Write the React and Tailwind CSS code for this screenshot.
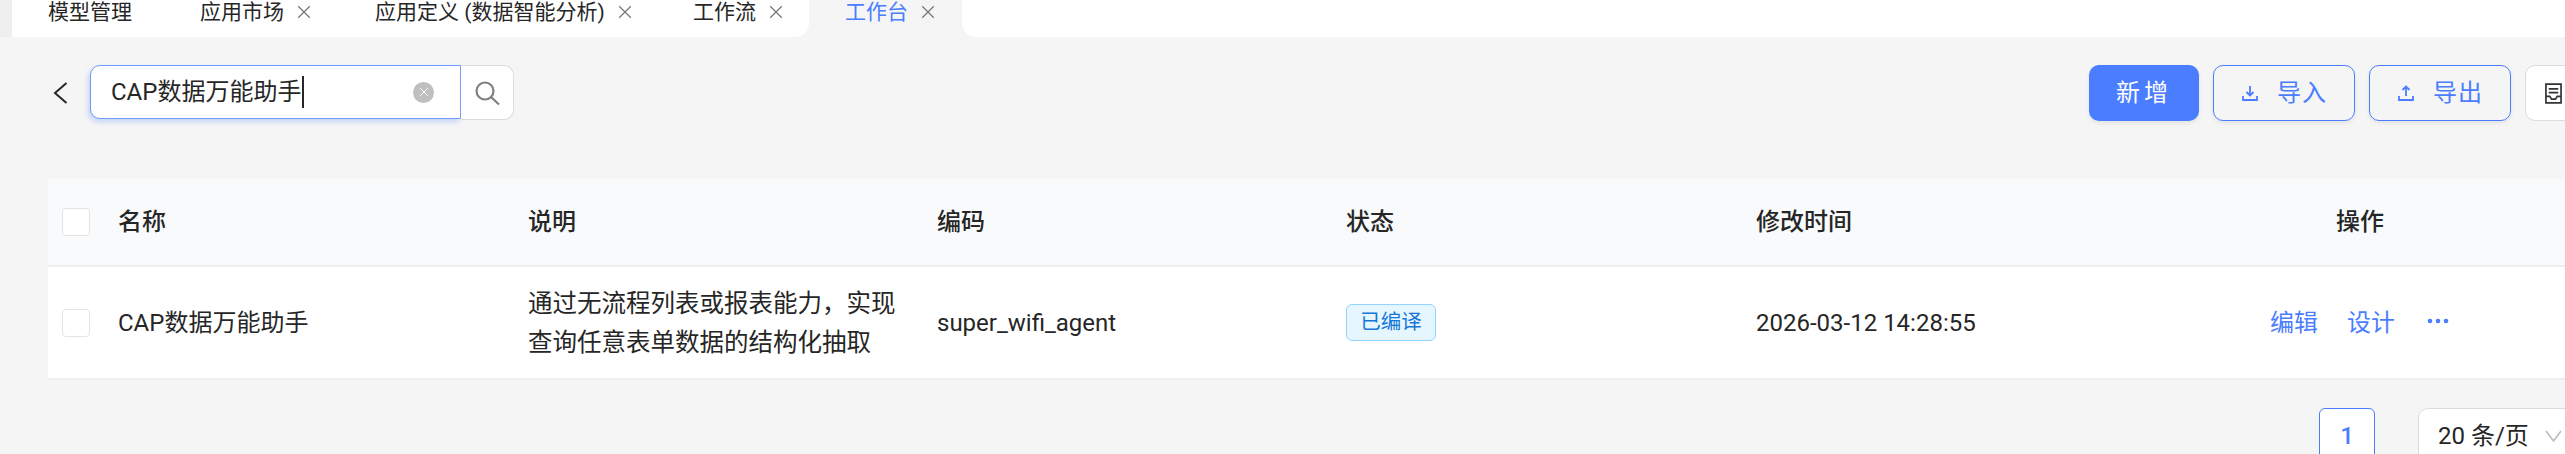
import React from 'react'

function CloseIcon({ className }) {
  return (
    <svg viewBox="0 0 14 14" className={className} fill="none" stroke="currentColor" strokeWidth="1">
      <path d="M2.5 2.5l9 9M11.5 2.5l-9 9" />
    </svg>
  )
}

function Tab({ label, active, close, className }) {
  return (
    <div className={`flex items-center shrink-0 h-[24px] text-[21px] leading-[24px] whitespace-nowrap ${className}`}>
      <span className={active ? 'text-[#4a7dff]' : 'text-[#262626]'}>{label}</span>
      {close && <CloseIcon className="w-[18px] h-[18px] ml-[11px] text-[#777]" />}
    </div>
  )
}

function TabBar() {
  return (
    <div className="flex h-[37px] bg-[#f5f5f5]">
      <div className="w-[12px] bg-[#efefef]" />
      <div className="flex w-[797px] bg-white rounded-br-[14px] pl-[36px]">
        <Tab label="模型管理" className="w-[152px]" />
        <Tab label="应用市场" close className="w-[175px]" />
        <Tab label="应用定义 (数据智能分析)" close className="w-[318px]" />
        <Tab label="工作流" close className="w-[116px]" />
      </div>
      <div className="w-[153px] pl-[36px]">
        <Tab label="工作台" active close />
      </div>
      <div className="flex-1 bg-white rounded-bl-[14px]" />
    </div>
  )
}

function Toolbar() {
  return (
    <div className="flex items-center w-[2581px] h-[56px] mt-[28px] pl-[52px]">
      <svg viewBox="0 0 16 24" className="w-[16px] h-[24px] text-[#262626]" fill="none" stroke="currentColor" strokeWidth="2">
        <path d="M14.5 2L3 12l11.5 10" />
      </svg>
      <div className="flex ml-[22px] h-[55px] self-start">
        <div className="flex items-center w-[371px] h-[54px] bg-white border border-[#6f9bff] rounded-l-[10px] pl-[20px] pr-[26px] shadow-[-2px_3px_5px_rgba(74,125,255,0.28)]">
          <span className="text-[24px] text-[#262626] whitespace-nowrap">CAP数据万能助手</span>
          <span className="w-[2px] h-[32px] ml-[1px] bg-[#262626]" />
          <span className="ml-auto flex items-center justify-center w-[21px] h-[21px] rounded-full bg-[#bfbfbf]">
            <CloseIcon className="w-[12px] h-[12px] text-white" />
          </span>
        </div>
        <div className="flex items-center justify-center w-[53px] h-[55px] bg-white border border-l-0 border-[#dcdcdc] rounded-r-[10px]">
          <svg viewBox="0 0 26 26" className="w-[26px] h-[26px] text-[#808080]" fill="none" stroke="currentColor" strokeWidth="2.2">
            <circle cx="11" cy="11" r="8.5" />
            <path d="M17 17l8 7.5" />
          </svg>
        </div>
      </div>
      <div className="flex ml-auto gap-[14px]">
        <button className="w-[110px] h-[56px] bg-[#4a7dff] rounded-[10px] text-white text-[24px] tracking-[4px] shadow-[0_2px_4px_rgba(0,0,0,0.08)]">新增</button>
        <button className="flex items-center justify-center w-[142px] h-[56px] border border-[#4a7dff] rounded-[10px] text-[#4a7dff] text-[24px] tracking-[1px] shadow-[0_2px_4px_rgba(0,0,0,0.08)]">
          <svg viewBox="0 0 18 18" className="w-[18px] h-[18px] mr-[18px]" fill="none" stroke="currentColor" strokeWidth="1.8">
            <path d="M9 2v9M5.5 8L9 11.5 12.5 8M2 12v4h14v-4" />
          </svg>
          导入
        </button>
        <button className="flex items-center justify-center w-[142px] h-[56px] border border-[#4a7dff] rounded-[10px] text-[#4a7dff] text-[24px] tracking-[1px] shadow-[0_2px_4px_rgba(0,0,0,0.08)]">
          <svg viewBox="0 0 18 18" className="w-[18px] h-[18px] mr-[18px]" fill="none" stroke="currentColor" strokeWidth="1.8">
            <path d="M9 12V3M5.5 6L9 2.5 12.5 6M2 12v4h14v-4" />
          </svg>
          导出
        </button>
        <button className="flex items-center justify-center shrink-0 w-[56px] h-[56px] bg-white border border-[#dcdcdc] rounded-[10px]">
          <svg viewBox="0 0 18 22" className="w-[17px] h-[21px] text-[#333]" fill="none" stroke="currentColor" strokeWidth="1.8">
            <path d="M1 1h16v20H1zM4 6h10M4 10h10M1 14h4l2 3h4l2-3h4" />
          </svg>
        </button>
      </div>
    </div>
  )
}

function Checkbox() {
  return <span className="w-[28px] h-[28px] bg-white border border-[#e3e3e3] rounded-[4px]" />
}

function DataTable() {
  return (
    <div className="mt-[58px] ml-[48px] w-[2600px]">
      <div className="grid grid-cols-[70px_410px_409px_409px_410px_410px_482px] items-center h-[88px] bg-[#f9fafb] border-b-2 border-[#eeeeee] text-[24px] text-[#262626] font-medium">
        <div className="pl-[14px] flex"><Checkbox /></div>
        <div>名称</div>
        <div>说明</div>
        <div>编码</div>
        <div>状态</div>
        <div>修改时间</div>
        <div className="pl-[170px]">操作</div>
      </div>
      <div className="grid grid-cols-[70px_410px_409px_409px_410px_410px_482px] items-center h-[113px] bg-white border-b-2 border-[#eeeeee] text-[24px] text-[#262626]">
        <div className="pl-[14px] flex"><Checkbox /></div>
        <div className="pt-[1px]">CAP数据万能助手</div>
        <div className="text-[24.5px] leading-[39px] w-[372px]">通过无流程列表或报表能力，实现查询任意表单数据的结构化抽取</div>
        <div className="pt-[1px]">super_wifi_agent</div>
        <div className="flex">
          <span className="flex items-center justify-center w-[90px] h-[37px] bg-[#e6f6ff] border border-[#91d5ff] rounded-[6px] text-[20.5px] text-[#1677d9]">已编译</span>
        </div>
        <div className="pt-[1px]">2026-03-12 14:28:55</div>
        <div className="flex items-center pl-[104px] gap-[29px] text-[#4a7dff]">
          <span>编辑</span>
          <span>设计</span>
          <svg viewBox="0 0 22 6" className="w-[22px] h-[6px] ml-[3px] -translate-y-[2px]" fill="currentColor">
            <circle cx="3" cy="3" r="2.3" />
            <circle cx="11" cy="3" r="2.3" />
            <circle cx="19" cy="3" r="2.3" />
          </svg>
        </div>
      </div>
    </div>
  )
}

function Pager() {
  return (
    <div className="flex mt-[28px] pl-[2319px] w-[2700px] text-[24px]">
      <div className="flex items-center justify-center w-[56px] h-[56px] bg-white border border-[#4a7dff] rounded-[6px] text-[#4a7dff] font-medium">1</div>
      <div className="flex items-center w-[190px] h-[56px] ml-[43px] pl-[19px] bg-white border border-[#dcdcdc] rounded-[10px] text-[#262626]">
        <span className="whitespace-nowrap">20 条/页</span>
        <svg viewBox="0 0 17 12" className="w-[17px] h-[12px] ml-[16px] text-[#bdbdbd]" fill="none" stroke="currentColor" strokeWidth="1.6">
          <path d="M1 1l7.5 10L16 1" />
        </svg>
      </div>
    </div>
  )
}

export default function App() {
  return (
    <div className="w-[2565px] h-[454px] overflow-hidden bg-[#f5f5f5] font-['Roboto','Noto_Sans_CJK_SC',sans-serif]">
      <TabBar />
      <Toolbar />
      <DataTable />
      <Pager />
    </div>
  )
}
